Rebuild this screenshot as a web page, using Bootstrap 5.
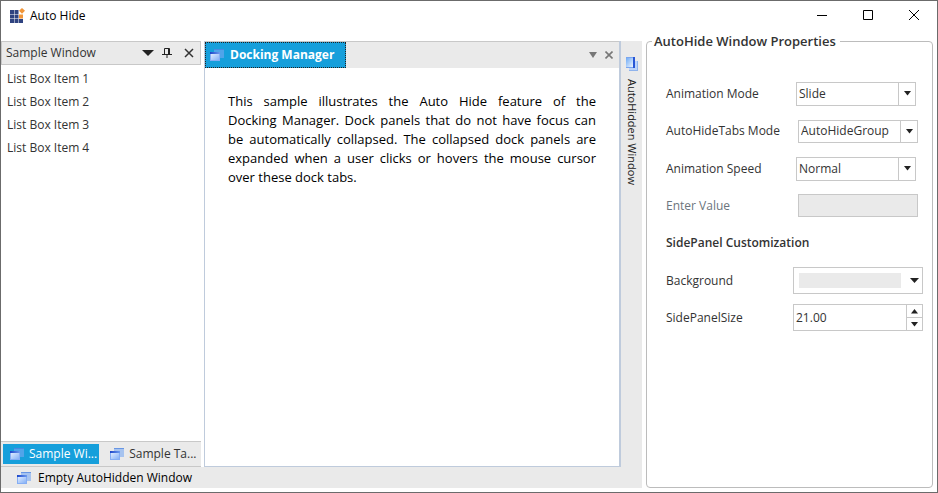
<!DOCTYPE html>
<html lang="en">
<head>
<meta charset="utf-8">
<meta name="viewport" content="width=device-width, initial-scale=1">
<title>Auto Hide</title>
<link href="https://cdn.jsdelivr.net/npm/bootstrap@5.3.0/dist/css/bootstrap.min.css" rel="stylesheet">
<style>
:root{--panel:#eaeaea;--line:#c8c8c8;--accent:#169fdb;--ink:#333}
body{font:12px/18px "Open Sans","Noto Sans",sans-serif;color:var(--ink)}
button{font:inherit;color:inherit;background:none;border:0;padding:0;white-space:nowrap}
svg{display:block;flex:none}
.window{border:1px solid #6b6b6b;padding-bottom:4px}
.titlebar{height:40px;padding:0 17px 0 8px;color:#000}
.titlebar h1{font-size:12px;line-height:18px;padding:0 0 10px 5px}
.app-logo{margin-bottom:10px}
.caption-buttons{gap:34px;padding-bottom:12px}
.work-area{min-width:0}
.tool-panel{width:200px;margin-right:3px}
.panel-head{height:24px;border:1px solid var(--line);background:var(--panel);padding:0 6px 0 4px}
.panel-head h2{font-size:12px;line-height:18px}
.sample-list{padding:2px 6px}
.sample-list li{line-height:23px}
.panel-tabs{height:26px;background:var(--panel);border-top:1px solid var(--line);border-bottom:1px solid var(--line);padding:2px;gap:4px}
.panel-tabs button{height:20px;padding:0 2px 0 7px;gap:5px}
.panel-tabs .current{background:var(--accent);color:#fff;font-weight:500}
.document{border:solid #bfcbdc;border-width:0 2px 1px 1px;min-width:0}
.doc-strip{height:27px;background:var(--panel);border-top:1px solid var(--line);padding-right:6px}
.doc-tab{width:141px;background:var(--accent);color:#fff;font-weight:700;outline:1px dotted #222;outline-offset:-1px;padding-left:5px;gap:6px}
.doc-text{font-size:13px;line-height:19px;color:#000;text-align:justify;padding:24px 23px}
.side-strip{width:21px;background:var(--panel)}
.side-strip button{writing-mode:vertical-rl;gap:8px;padding-top:16px;font-size:11px;color:#222}
.bottom-strip{height:21px;background:var(--panel);padding-left:16px;color:#000}
.bottom-strip button{gap:7px}
.properties{width:287px;margin:-9px 4px 0 4px;border:1px solid #bcbcbc;border-radius:4px;padding:25px 9px 0 19px}
.properties legend{float:none;width:auto;font-size:13px;line-height:18px;font-weight:600;margin:0 0 0 -14px;padding:0 4px 0 2px}
.prop-row{height:37px;display:grid;grid-template-columns:127px 1fr;align-items:center}
.prop-row.tall{height:38px}
.prop-row label,.prop-row h3{font-size:12px;line-height:18px;margin:0}
.prop-row svg{fill:#222}
.field{width:120px;height:24px;border:1px solid var(--line);background:#fff;color:var(--ink);margin-left:3px;border-radius:0}
.field.shifted{margin-left:5px;height:23px}
.combo{display:grid;grid-template-columns:1fr 17px}
.combo select{grid-area:1/1/2/3;appearance:none;border:0;background:none;font:inherit;color:inherit;padding:0 17px 0 2px;outline:0;min-width:0}
.combo i{grid-area:1/2;border-left:1px solid var(--line);pointer-events:none;display:grid;place-items:center}
.field.off{background:var(--panel)}
.wide{width:130px;height:27px;border:1px solid var(--line)}
.swatch{flex:1;height:15px;background:var(--panel)}
button.wide{padding:0 3px 0 5px;gap:9px}
.spin input{flex:1;min-width:0;border:0;padding:0 2px;font:inherit;color:inherit;outline:0}
.spin div{width:16px;border-left:1px solid var(--line)}
.spin button+button{border-top:1px solid var(--line)}
</style>
<script src="https://cdn.jsdelivr.net/npm/bootstrap@5.3.0/dist/js/bootstrap.bundle.min.js"></script>
</head>
<body>
<svg width="0" height="0" class="position-absolute" aria-hidden="true">
<defs>
<linearGradient id="pane" x1="0" y1="0" x2="1" y2="1"><stop offset="0" stop-color="#deebff"/><stop offset="1" stop-color="#86b1f6"/></linearGradient>
<linearGradient id="bar" x1="0" x2="1"><stop offset="0" stop-color="#1c45c8"/><stop offset="1" stop-color="#6f9cf0"/></linearGradient>
<linearGradient id="sidePane" x1="0" y1="0" x2="1" y2="1"><stop offset="0" stop-color="#6faaf5"/><stop offset="1" stop-color="#eef6ff"/></linearGradient>
<symbol id="windows" viewBox="0 0 14 14"><path d="M4 1h10v9H4z" fill="#78a9f2" fill-opacity=".6"/><path d="M4 1h10v1H4z" fill="#3f78dc" fill-opacity=".6"/><path d="M0 5h10v8H0z" fill="#86aef4"/><path d="M1 6h8v6H1z" fill="url(#pane)"/><path d="M0 4h10v2H0z" fill="url(#bar)"/></symbol>
<symbol id="down" viewBox="0 0 7 5"><path d="M0 0h7L3.500 4.500z"/></symbol>
</defs></svg>
<div class="window d-flex flex-column min-vh-100 bg-white">
<header class="titlebar d-flex align-items-center">
<svg class="app-logo" width="16" height="16" viewBox="0 0 16 16"><path fill="#2f4380" d="M1 2h4v4H1zM5.500 2h4v4h-4zM1 6.500h4v4H1zM5.500 6.500h4v4h-4zM1 11h4v4H1zM5.500 11h4v4h-4zM10 11h4v4h-4z"/><path fill="#f19538" d="M10 6.500h4v4h-4zM13 0l3 2.800-3 2.900-3-2.900z"/></svg>
<h1 class="mb-0 fw-normal">Auto Hide</h1>
<div class="caption-buttons d-flex ms-auto">
<button aria-label="Minimize"><svg width="12" height="12" stroke="#000"><path d="M1 6.500h10"/></svg></button>
<button aria-label="Maximize"><svg width="12" height="12" stroke="#000" fill="none"><path d="M1.500 1.500h9v9h-9z"/></svg></button>
<button aria-label="Close"><svg width="12" height="12" stroke="#000"><path d="M1 1l10 10M11 1L1 11"/></svg></button>
</div>
</header>
<main class="d-flex flex-grow-1">
<div class="work-area flex-fill d-flex flex-column">
<div class="d-flex flex-grow-1">
<section class="tool-panel flex-shrink-0 d-flex flex-column">
<div class="panel-head d-flex align-items-center">
<h2 class="mb-0 fw-normal me-auto">Sample Window</h2>
<button class="me-2" aria-label="Window position"><svg width="12" height="6" fill="#222"><path d="M0 0h12L6 6z"/></svg></button>
<button class="me-2" aria-label="Auto hide"><svg width="10" height="12" fill="none" stroke="#222"><path d="M2.500 7V1.500h5V7M0 7.500h10M5 8v3"/><path d="M6.500 1v6"/></svg></button>
<button class="ms-1" aria-label="Close panel"><svg width="10" height="10" stroke="#333" stroke-width="1.500"><path d="M1 1l8 8M9 1L1 9"/></svg></button>
</div>
<ul class="sample-list list-unstyled mb-0 flex-grow-1"><li>List Box Item 1</li><li>List Box Item 2</li><li>List Box Item 3</li><li>List Box Item 4</li></ul>
<div class="panel-tabs d-flex">
<button class="current d-flex align-items-center"><svg width="14" height="14"><use href="#windows"/></svg>Sample Wi...</button>
<button class="d-flex align-items-center"><svg width="14" height="14"><use href="#windows"/></svg>Sample Ta...</button>
</div>
</section>
<section class="document flex-fill">
<div class="doc-strip d-flex align-items-stretch">
<button class="doc-tab d-flex align-items-center"><svg width="14" height="14"><use href="#windows"/></svg>Docking Manager</button>
<div class="ms-auto d-flex align-items-center gap-2"><button aria-label="Document list"><svg width="8" height="6" fill="#777"><path d="M0 0h8L4 6z"/></svg></button><button aria-label="Close document"><svg width="8" height="8" stroke="#777" stroke-width="1.600"><path d="M.500.500l7 7M7.500.500l-7 7"/></svg></button></div>
</div>
<p class="doc-text mb-0">This sample illustrates the Auto Hide feature of the Docking&nbsp;Manager. Dock panels that do not have focus can be automatically collapsed. The collapsed dock panels are expanded when a user clicks or hovers the mouse cursor over these dock tabs.</p>
</section>
<aside class="side-strip flex-shrink-0"><button class="d-flex align-items-center w-100"><svg width="12" height="14" viewBox="0 0 12 14"><path d="M3 4h9v10H3z" fill="#bcd4fa"/><path d="M11 4h1v10H3v-1h8z" fill="#8fb3ec"/><path d="M0 0h9v11H0z" fill="#7ba5ee"/><path d="M0 1h7v9H0z" fill="url(#sidePane)"/><path d="M7 0h2v11H7z" fill="#2856d6"/></svg>AutoHidden Window</button></aside>
</div>
<div class="bottom-strip d-flex"><button class="d-flex align-items-center"><svg width="14" height="14"><use href="#windows"/></svg>Empty AutoHidden Window</button></div>
</div>
<fieldset class="properties flex-shrink-0">
<legend>AutoHide Window Properties</legend>
<div class="prop-row"><label for="mode">Animation Mode</label><div class="field combo"><select id="mode"><option>Slide</option></select><i><svg width="7" height="5"><use href="#down"/></svg></i></div></div>
<div class="prop-row tall"><label for="tabs">AutoHideTabs Mode</label><div class="field shifted combo"><select id="tabs"><option>AutoHideGroup</option></select><i><svg width="7" height="5"><use href="#down"/></svg></i></div></div>
<div class="prop-row"><label for="speed">Animation Speed</label><div class="field combo"><select id="speed"><option>Normal</option></select><i><svg width="7" height="5"><use href="#down"/></svg></i></div></div>
<div class="prop-row"><label for="val" class="text-secondary">Enter Value</label><input id="val" class="field shifted off" disabled></div>
<div class="prop-row tall"><h3 class="fw-semibold text-nowrap">SidePanel Customization</h3></div>
<div class="prop-row"><label for="bg">Background</label><button id="bg" class="wide d-flex align-items-center"><span class="swatch"></span><svg width="9" height="5" viewBox="0 0 9 5"><path d="M0 0h9L4.500 5z"/></svg></button></div>
<div class="prop-row"><label for="size">SidePanelSize</label><div class="wide spin d-flex"><input id="size" value="21.00"><div class="d-flex flex-column"><button class="flex-fill d-grid justify-content-center align-items-center" aria-label="Increase"><svg width="7" height="5"><path d="M0 4.500h7L3.500 0z"/></svg></button><button class="flex-fill d-grid justify-content-center align-items-center" aria-label="Decrease"><svg width="7" height="5"><use href="#down"/></svg></button></div></div></div>
</fieldset>
</main>
</div>
</body>
</html>
